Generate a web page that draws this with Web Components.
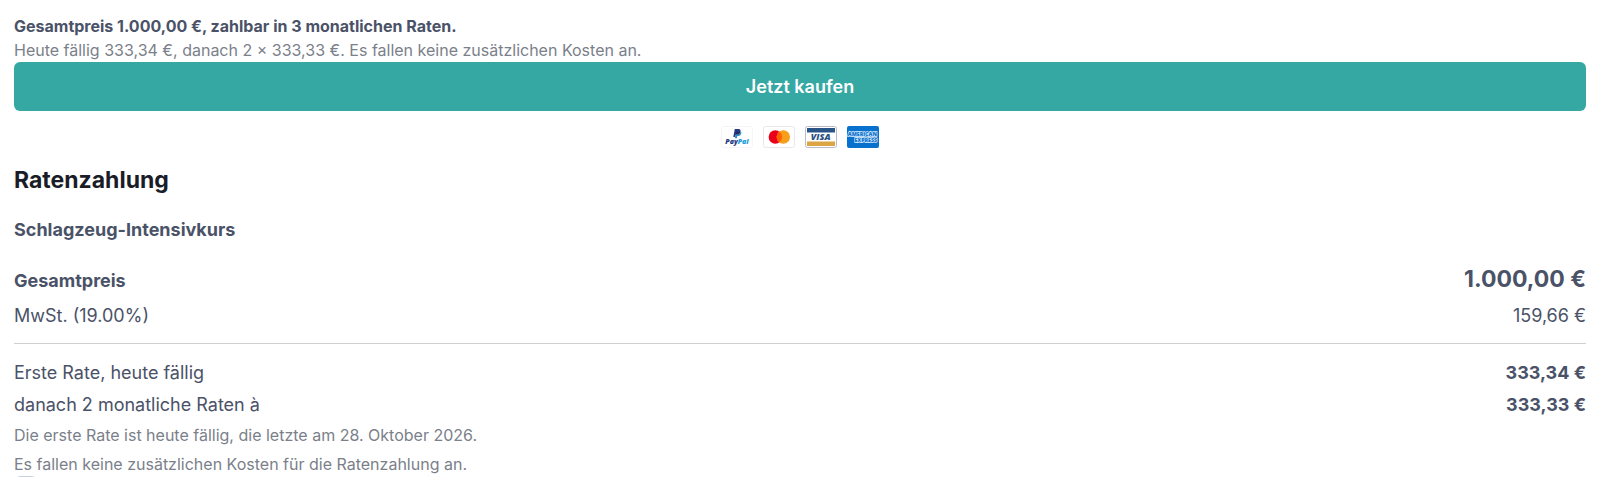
<!DOCTYPE html>
<html lang="de">
<head>
<meta charset="UTF-8">
<meta name="viewport" content="width=device-width, initial-scale=1.0">
<title>Ratenzahlung</title>
<style>
    body {
        margin: 0;
        background: #fff;
        color: #4a5268;
        font-family: Inter, "Liberation Sans", sans-serif;
        font-size: 18px;
        line-height: 28px;
    }
</style>
</head>
<body>
<checkout-page>
    <price-notice>
        <span slot="title">Gesamtpreis 1.000,00 €, zahlbar in 3 monatlichen Raten.</span>
        Heute fällig 333,34 €, danach 2 × 333,33 €. Es fallen keine zusätzlichen Kosten an.
    </price-notice>
    <buy-button>Jetzt kaufen</buy-button>
    <payment-methods></payment-methods>
    <installment-summary>
        <span slot="heading">Ratenzahlung</span>
        <span slot="product">Schlagzeug-Intensivkurs</span>
        <price-row slot="totals" variant="total" amount="1.000,00 €">Gesamtpreis</price-row>
        <price-row slot="totals" amount="159,66 €">MwSt. (19.00%)</price-row>
        <price-row slot="rates" variant="rate" amount="333,34 €">Erste Rate, heute fällig</price-row>
        <price-row slot="rates" variant="rate" amount="333,33 €">danach 2 monatliche Raten à</price-row>
        <span slot="notes">Die erste Rate ist heute fällig, die letzte am 28. Oktober 2026.</span>
        <span slot="notes">Es fallen keine zusätzlichen Kosten für die Ratenzahlung an.</span>
    </installment-summary>
    <terms-check></terms-check>
</checkout-page>

<script>
// --- Page ---

class CheckoutPage extends HTMLElement {
    constructor() {
        super();
        this.attachShadow({ mode: 'open' });
        this.shadowRoot.innerHTML = `
            <style>
                :host { display: block; height: 100vh; overflow: hidden; }
                main {
                    display: flex;
                    flex-direction: column;
                    padding: 14px 14px 0;
                }
            </style>
            <main><slot></slot></main>
        `;
    }
}

class PriceNotice extends HTMLElement {
    constructor() {
        super();
        this.attachShadow({ mode: 'open' });
        this.shadowRoot.innerHTML = `
            <style>
                :host { display: block; font-size: 16px; line-height: 24px; }
                p { margin: 0; color: #7b7f8a; }
                .title { color: #4a5268; font-weight: 700; }
            </style>
            <p class="title"><slot name="title"></slot></p>
            <p><slot></slot></p>
        `;
    }
}

class BuyButton extends HTMLElement {
    constructor() {
        super();
        this.attachShadow({ mode: 'open' });
        this.shadowRoot.innerHTML = `
            <style>
                :host { display: block; }
                button {
                    width: 100%;
                    padding: 11px 16px 10px;
                    border: 0;
                    border-radius: 6px;
                    background: #35a8a3;
                    color: #fff;
                    font: inherit;
                    font-weight: 600;
                    cursor: pointer;
                }
                button:hover { background: #2f9893; }
            </style>
            <button type="button"><slot></slot></button>
        `;
    }
}

// --- Payment logos ---

class PaymentMethods extends HTMLElement {
    constructor() {
        super();
        this.attachShadow({ mode: 'open' });
        this.shadowRoot.innerHTML = `
            <style>
                :host {
                    display: flex;
                    justify-content: center;
                    gap: 10px;
                    padding: 15px 0 16px;
                }
                svg { display: block; width: 32px; height: 22px; }
                text { font-family: "Open Sans", sans-serif; font-weight: 800; }
            </style>
            <svg viewBox="0 0 32 22" role="img" aria-label="PayPal">
                <rect x=".5" y=".5" width="31" height="21" rx="2" fill="#fff" stroke="#f5f5f7"/>
                <path d="M13.8 3H17.6Q20 3 19.5 5.7Q19 8.5 16 8.5H14.8L14.3 11H12.3Z" fill="#253b80"/>
                <path d="M19.8 5Q20.8 6 20.1 8Q19.4 10 17.2 10H16.3L15.8 12.3H13.9L14.8 8.7H16Q19.1 8.5 19.8 5Z" fill="#2790c3"/>
                <path d="M15.1 6H18.9L18 8.2L16 8.5H14.8Z" fill="#222d65"/>
                <text y="18.4" font-size="7" font-style="italic"><tspan x="4.3" fill="#253b80">Pay</tspan><tspan fill="#179bd7">Pal</tspan></text>
            </svg>
            <svg viewBox="0 0 32 22" role="img" aria-label="Mastercard">
                <rect x=".5" y=".5" width="31" height="21" rx="2" fill="#fff" stroke="#e8e8ea"/>
                <circle cx="12.3" cy="11" r="6.7" fill="#eb001b"/>
                <circle cx="20.3" cy="11" r="6.7" fill="#f79e1b"/>
                <path d="M16.3 5.6a6.7 6.7 0 0 1 0 10.8a6.7 6.7 0 0 1 0-10.8Z" fill="#ff5f00"/>
            </svg>
            <svg viewBox="0 0 32 22" role="img" aria-label="Visa">
                <rect x=".5" y=".5" width="31" height="21" rx="2" fill="#fff" stroke="#b9bcc8"/>
                <path d="M2 2H30V6.5H2Z" fill="#2a5488"/>
                <path d="M2 15.5H30V20H2Z" fill="#dba543"/>
                <text x="5.8" y="14.3" font-size="9" font-style="italic" fill="#2b4f80">VISA</text>
            </svg>
            <svg viewBox="0 0 32 22" role="img" aria-label="American Express">
                <rect width="32" height="22" rx="2" fill="#0871ce"/>
                <g fill="#0871ce" stroke="#dcecfb" stroke-width="1.3" paint-order="stroke" font-size="5.3">
                    <text x=".8" y="9.8">AMERICAN</text>
                    <text x="7.4" y="16">EXPRESS</text>
                </g>
            </svg>
        `;
    }
}

// --- Summary ---

class PriceRow extends HTMLElement {
    constructor() {
        super();
        this.attachShadow({ mode: 'open' });
    }

    static get observedAttributes() {
        return ['amount'];
    }

    connectedCallback() {
        this.render();
    }

    attributeChangedCallback() {
        this.render();
    }

    render() {
        const amount = this.getAttribute('amount') || '--';

        this.shadowRoot.innerHTML = `
            <style>
                :host {
                    display: flex;
                    justify-content: space-between;
                    align-items: baseline;
                }
                :host([variant="total"]) { font-weight: 700; }
                :host([variant="total"]) .amount { font-size: 23px; line-height: 32px; }
                :host([variant="rate"]) .amount { font-weight: 700; }
                .amount { white-space: nowrap; }
            </style>
            <span><slot></slot></span>
            <span class="amount">${amount}</span>
        `;
    }
}

class InstallmentSummary extends HTMLElement {
    constructor() {
        super();
        this.attachShadow({ mode: 'open' });
        this.shadowRoot.innerHTML = `
            <style>
                :host { display: block; }
                h2 {
                    margin: 0 0 20px;
                    color: #1a1c28;
                    font-size: 23px;
                    font-weight: 700;
                    line-height: 32px;
                }
                h3 { margin: 0 0 19px; font-size: 18px; font-weight: 700; }
                hr { margin: 13px 0 15px; border: 0; border-top: 1px solid #cfd0d4; }
                .totals, .rates, .notes { display: flex; flex-direction: column; }
                .totals { gap: 7px; }
                .rates { gap: 4px; }
                .notes {
                    gap: 5px;
                    margin-top: 4px;
                    color: #7b7f8a;
                    font-size: 16px;
                    line-height: 24px;
                }
            </style>
            <h2><slot name="heading"></slot></h2>
            <h3><slot name="product"></slot></h3>
            <div class="totals"><slot name="totals"></slot></div>
            <hr>
            <div class="rates"><slot name="rates"></slot></div>
            <div class="notes"><slot name="notes"></slot></div>
        `;
    }
}

class TermsCheck extends HTMLElement {
    constructor() {
        super();
        this.attachShadow({ mode: 'open' });
        this.shadowRoot.innerHTML = `
            <style>
                :host { display: flex; }
                input {
                    appearance: none;
                    width: 20px;
                    height: 20px;
                    margin: 0 2px;
                    border: 1px solid #cbd0e2;
                    border-radius: 4px;
                    background: #fff;
                }
                input:checked { background: #35a8a3; }
            </style>
            <input type="checkbox" aria-label="AGB akzeptieren">
        `;
    }
}

customElements.define('checkout-page', CheckoutPage);
customElements.define('price-notice', PriceNotice);
customElements.define('buy-button', BuyButton);
customElements.define('payment-methods', PaymentMethods);
customElements.define('price-row', PriceRow);
customElements.define('installment-summary', InstallmentSummary);
customElements.define('terms-check', TermsCheck);
</script>
</body>
</html>
